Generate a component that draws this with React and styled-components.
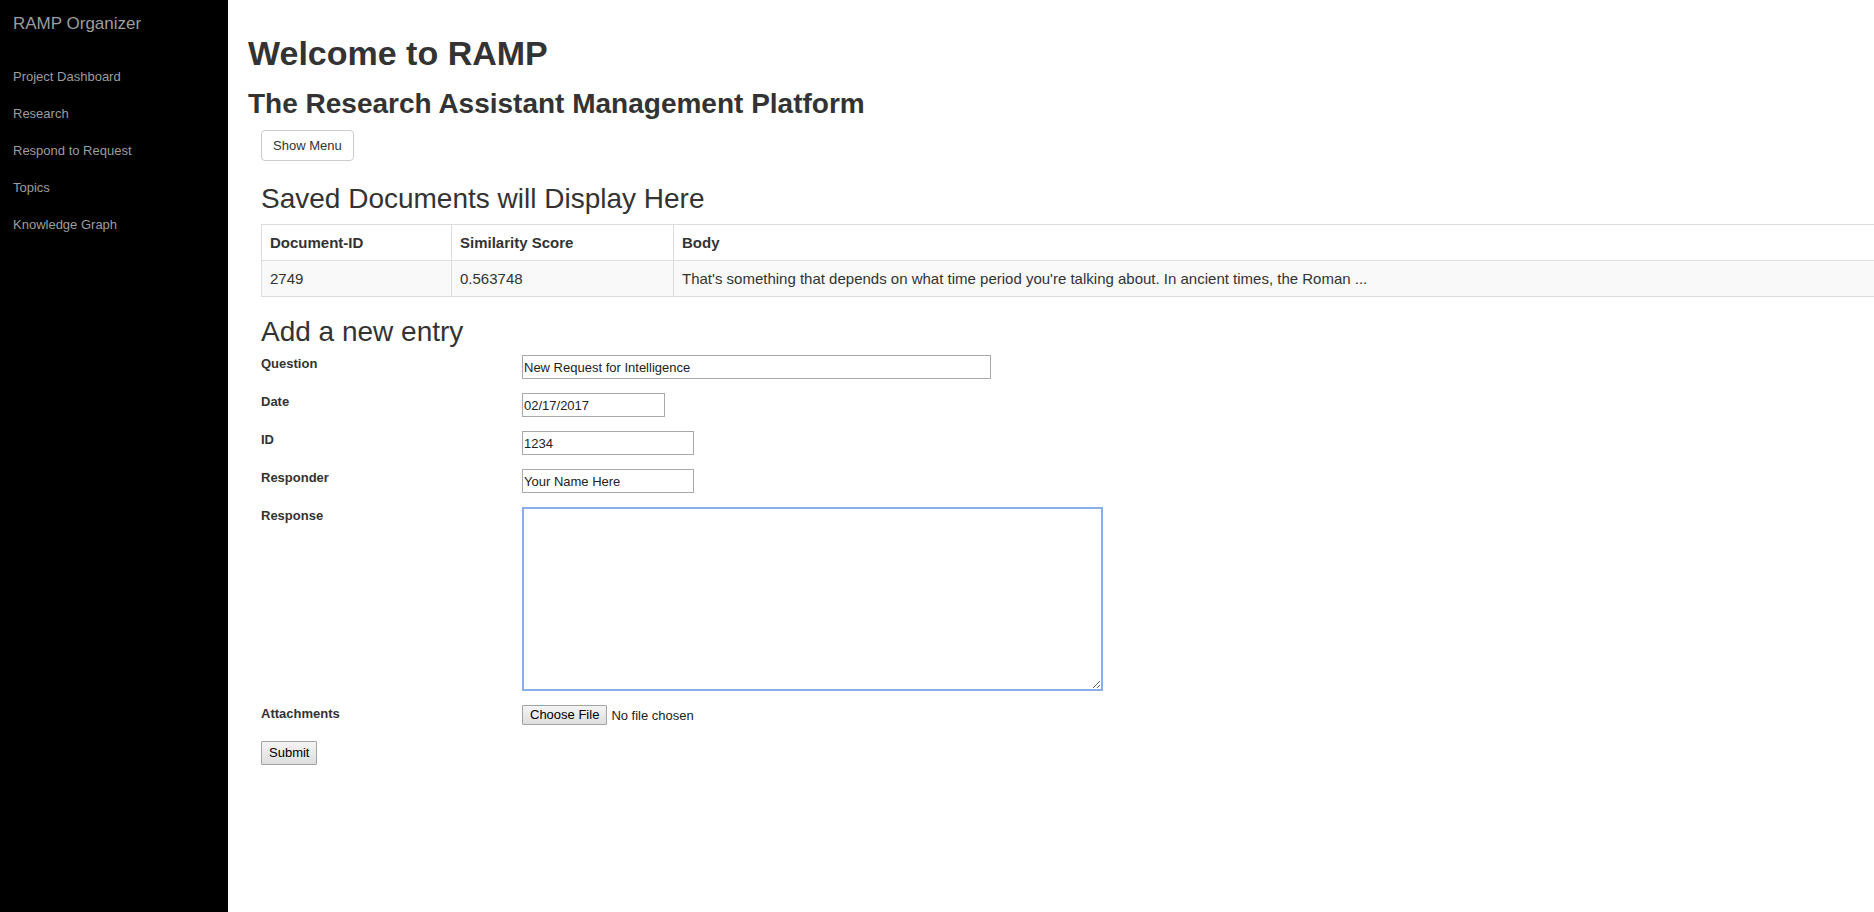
import React from 'react'
import styled, { createGlobalStyle } from 'styled-components'

const GlobalStyle = createGlobalStyle`
    html, body {
        margin: 0;
        padding: 0;
        overflow: hidden;
        background: #fff;
        font-family: "Liberation Sans", Arial, sans-serif;
    }
    * {
        box-sizing: border-box;
    }
`

const Layout = styled.div`
    display: flex;
    min-height: 100vh;
`

// left black nav column
const Sidebar = styled.nav`
    width: 228px;
    flex-shrink: 0;
    background: #000;
    padding-top: 14px;
`

const Brand = styled.div`
    padding: 0 13px;
    margin-bottom: 24px;
    font-size: 17px;
    line-height: 20px;
    color: #9d9d9d;
`

const NavList = styled.ul`
    list-style: none;
    margin: 0;
    padding: 0;
`

const NavLink = styled.a`
    display: block;
    padding: 10px 13px;
    font-size: 13px;
    line-height: 17px;
    color: #9d9d9d;
    text-decoration: none;
`

const Main = styled.main`
    flex: 1;
    min-width: 0;
    padding: 33px 0 0 20px;
    color: #333;
`

const Title = styled.h1`
    margin: 0;
    font-size: 34px;
    line-height: 40px;
    font-weight: 700;
`

const Subtitle = styled.h2`
    margin: 15px 0 0;
    font-size: 28px;
    line-height: 32px;
    font-weight: 700;
`

const Content = styled.div`
    padding-left: 13px;
`

const MenuButton = styled.button`
    margin-top: 10px;
    padding: 6px 11px;
    font-family: inherit;
    font-size: 13px;
    line-height: 17px;
    color: #333;
    background: #fff;
    border: 1px solid #ccc;
    border-radius: 4px;
`

const SectionTitle = styled.h3`
    margin: ${p => p.$mt}px 0 ${p => p.$mb}px;
    font-size: 28px;
    line-height: 32px;
    font-weight: 400;
`

const DocTable = styled.table`
    width: 1640px;
    table-layout: fixed;
    border-collapse: collapse;
    font-size: 15px;
    line-height: 19px;
`

const Th = styled.th`
    width: ${p => (p.$w ? `${p.$w}px` : 'auto')};
    padding: 8px;
    border: 1px solid #ddd;
    text-align: left;
    font-weight: 700;
`

const Td = styled.td`
    padding: 8px;
    border: 1px solid #ddd;
    background: #f9f9f9;
    white-space: nowrap;
`

const Form = styled.form`
    margin-top: 7px;
`

const FormRow = styled.div`
    display: flex;
    align-items: flex-start;
    margin-bottom: ${p => p.$mb || 14}px;
`

const Label = styled.label`
    width: 261px;
    flex-shrink: 0;
    font-size: 13px;
    line-height: 17px;
    font-weight: 700;
`

const TextInput = styled.input`
    width: ${p => p.$w}px;
    height: 24px;
    padding: 0 1px;
    font-family: inherit;
    font-size: 13px;
    color: #222;
    border: 1px solid #a9a9a9;
    outline: none;
`

const ResponseArea = styled.textarea`
    width: 581px;
    height: 184px;
    border: 2px solid #89aee8;
    outline: none;
    resize: both;
    font-family: inherit;
    font-size: 13px;
`

const FilePicker = styled.div`
    display: flex;
    align-items: center;
    font-size: 13px;
    color: #222;
`

const HiddenFile = styled.input`
    display: none;
`

// old windows style grey button
const GreyButton = styled.span`
    display: inline-block;
    height: ${p => p.$h}px;
    padding: 0 ${p => p.$px}px;
    font-family: inherit;
    font-size: 13px;
    line-height: ${p => p.$h - 2}px;
    color: #000;
    background: linear-gradient(#f4f4f4, #dedede);
    border: 1px solid #a3a3a3;
    border-radius: 1px;
`

const NoFile = styled.span`
    margin-left: 4px;
`

const SubmitButton = styled(GreyButton).attrs({ as: 'button', type: 'submit' })``

const navItems = ['Project Dashboard', 'Research', 'Respond to Request', 'Topics', 'Knowledge Graph']

const App = () => {
    return (
        <Layout>
            <GlobalStyle />
            <Sidebar>
                <Brand>RAMP Organizer</Brand>
                <NavList>
                    {navItems.map(item => (
                        <li key={item}><NavLink href="#">{item}</NavLink></li>
                    ))}
                </NavList>
            </Sidebar>
            <Main>
                <Title>Welcome to RAMP</Title>
                <Subtitle>The Research Assistant Management Platform</Subtitle>
                <Content>
                    <MenuButton>Show Menu</MenuButton>
                    <SectionTitle $mt={22} $mb={9}>Saved Documents will Display Here</SectionTitle>
                    <DocTable>
                        <thead>
                            <tr>
                                <Th $w={190}>Document-ID</Th>
                                <Th $w={222}>Similarity Score</Th>
                                <Th>Body</Th>
                            </tr>
                        </thead>
                        <tbody>
                            <tr>
                                <Td>2749</Td>
                                <Td>0.563748</Td>
                                <Td>That's something that depends on what time period you're talking about. In ancient times, the Roman ...</Td>
                            </tr>
                        </tbody>
                    </DocTable>
                    <SectionTitle $mt={19} $mb={0}>Add a new entry</SectionTitle>
                    <Form onSubmit={e => e.preventDefault()}>
                        <FormRow>
                            <Label>Question</Label>
                            <TextInput $w={469} type="text" defaultValue="New Request for Intelligence" />
                        </FormRow>
                        <FormRow>
                            <Label>Date</Label>
                            <TextInput $w={143} type="text" defaultValue="02/17/2017" />
                        </FormRow>
                        <FormRow>
                            <Label>ID</Label>
                            <TextInput $w={172} type="text" defaultValue="1234" />
                        </FormRow>
                        <FormRow>
                            <Label>Responder</Label>
                            <TextInput $w={172} type="text" defaultValue="Your Name Here" />
                        </FormRow>
                        <FormRow>
                            <Label>Response</Label>
                            <ResponseArea />
                        </FormRow>
                        <FormRow $mb={16}>
                            <Label>Attachments</Label>
                            <FilePicker>
                                <label>
                                    <HiddenFile type="file" />
                                    <GreyButton $h={20} $px={7}>Choose File</GreyButton>
                                </label>
                                <NoFile>No file chosen</NoFile>
                            </FilePicker>
                        </FormRow>
                        <SubmitButton $h={24} $px={7}>Submit</SubmitButton>
                    </Form>
                </Content>
            </Main>
        </Layout>
    )
}

export default App
